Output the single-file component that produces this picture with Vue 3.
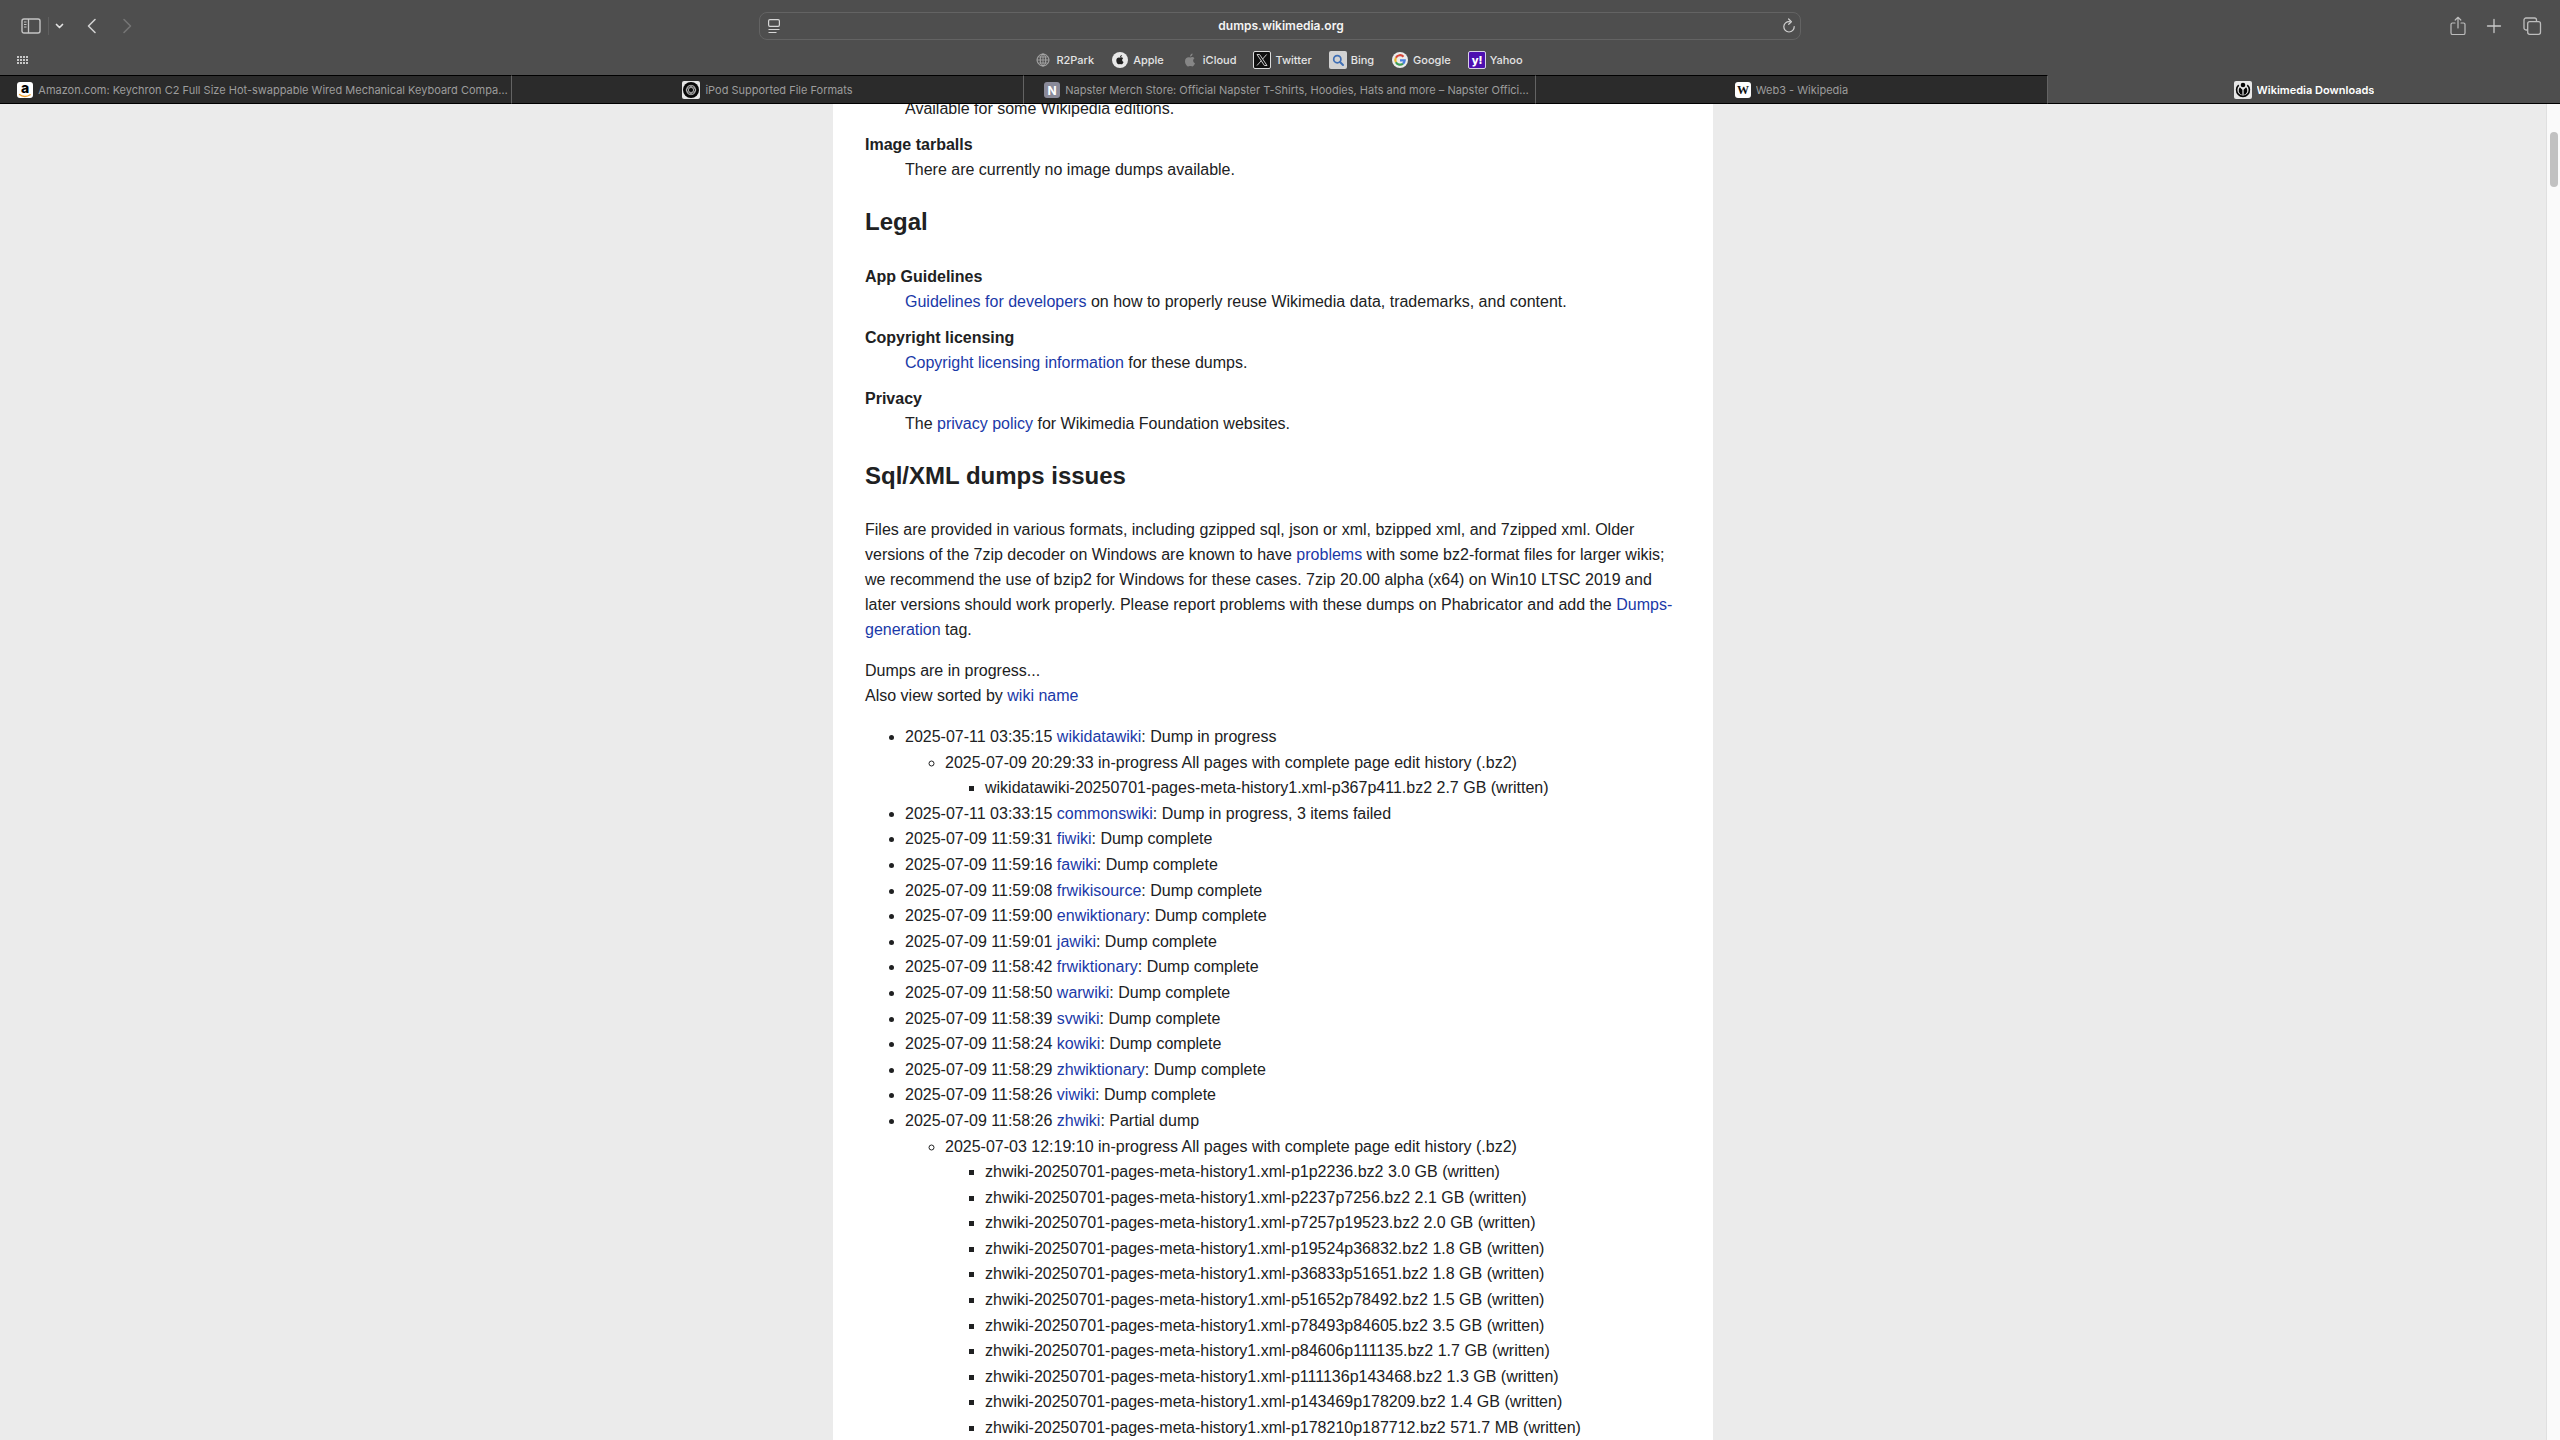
<script setup>
const bookmarks = ['R2Park', 'Apple', 'iCloud', 'Twitter', 'Bing', 'Google', 'Yahoo']

const tabs = [
  { id: 'amazon', title: 'Amazon.com: Keychron C2 Full Size Hot-swappable Wired Mechanical Keyboard Compa…' },
  { id: 'ipod', title: 'iPod Supported File Formats' },
  { id: 'napster', title: 'Napster Merch Store: Official Napster T-Shirts, Hoodies, Hats and more – Napster Offici…' },
  { id: 'web3', title: 'Web3 - Wikipedia' },
  { id: 'wikimedia', title: 'Wikimedia Downloads', active: true },
]

const history = 'in-progress All pages with complete page edit history (.bz2)'

const dumps = [
  {
    time: '2025-07-11 03:35:15', wiki: 'wikidatawiki', status: 'Dump in progress',
    job: `2025-07-09 20:29:33 ${history}`,
    files: ['wikidatawiki-20250701-pages-meta-history1.xml-p367p411.bz2 2.7 GB (written)'],
  },
  { time: '2025-07-11 03:33:15', wiki: 'commonswiki', status: 'Dump in progress, 3 items failed' },
  { time: '2025-07-09 11:59:31', wiki: 'fiwiki', status: 'Dump complete' },
  { time: '2025-07-09 11:59:16', wiki: 'fawiki', status: 'Dump complete' },
  { time: '2025-07-09 11:59:08', wiki: 'frwikisource', status: 'Dump complete' },
  { time: '2025-07-09 11:59:00', wiki: 'enwiktionary', status: 'Dump complete' },
  { time: '2025-07-09 11:59:01', wiki: 'jawiki', status: 'Dump complete' },
  { time: '2025-07-09 11:58:42', wiki: 'frwiktionary', status: 'Dump complete' },
  { time: '2025-07-09 11:58:50', wiki: 'warwiki', status: 'Dump complete' },
  { time: '2025-07-09 11:58:39', wiki: 'svwiki', status: 'Dump complete' },
  { time: '2025-07-09 11:58:24', wiki: 'kowiki', status: 'Dump complete' },
  { time: '2025-07-09 11:58:29', wiki: 'zhwiktionary', status: 'Dump complete' },
  { time: '2025-07-09 11:58:26', wiki: 'viwiki', status: 'Dump complete' },
  {
    time: '2025-07-09 11:58:26', wiki: 'zhwiki', status: 'Partial dump',
    job: `2025-07-03 12:19:10 ${history}`,
    files: [
      'p1p2236.bz2 3.0 GB', 'p2237p7256.bz2 2.1 GB', 'p7257p19523.bz2 2.0 GB', 'p19524p36832.bz2 1.8 GB',
      'p36833p51651.bz2 1.8 GB', 'p51652p78492.bz2 1.5 GB', 'p78493p84605.bz2 3.5 GB', 'p84606p111135.bz2 1.7 GB',
      'p111136p143468.bz2 1.3 GB', 'p143469p178209.bz2 1.4 GB', 'p178210p187712.bz2 571.7 MB',
    ].map((part) => `zhwiki-20250701-pages-meta-history1.xml-${part} (written)`),
  },
]
</script>

<template>
  <div class="browser">
    <header class="chrome">
      <div class="toolbar">
        <div class="tools tools-left">
          <button class="tool" aria-label="Show sidebar">
            <svg width="20" height="18" viewBox="0 0 20 18" fill="none" stroke="#c4c4c4">
              <rect x="1" y="2" width="18" height="14" rx="2" stroke-width="1.4" />
              <path d="M7.5 2v14" stroke-width="1.3" />
              <path d="M3 5h2.500M3 7.500h2.500M3 10h2.500" />
            </svg>
          </button>
          <span class="tool-divider"></span>
          <button class="tool tool-chevron" aria-label="Tab groups">
            <svg width="9" height="8" viewBox="0 0 9 8" fill="none" stroke="#e2e2e2" stroke-width="1.7" stroke-linecap="round" stroke-linejoin="round">
              <path d="M1.500 2.500l3 3 3-3" />
            </svg>
          </button>
          <button class="tool tool-back" aria-label="Back">
            <svg width="10" height="18" viewBox="0 0 10 18" fill="none" stroke="#d0d0d0" stroke-width="1.6" stroke-linecap="round" stroke-linejoin="round">
              <path d="M8 2.500L1.500 9 8 15.500" />
            </svg>
          </button>
          <button class="tool tool-forward" aria-label="Forward" disabled>
            <svg width="10" height="18" viewBox="0 0 10 18" fill="none" stroke="#757575" stroke-width="1.6" stroke-linecap="round" stroke-linejoin="round">
              <path d="M2 2.500L8.500 9 2 15.500" />
            </svg>
          </button>
        </div>

        <div class="address">
          <button class="tool" aria-label="Page settings">
            <svg width="12" height="16" viewBox="0 0 12 16" fill="none" stroke="#d6d6d6" stroke-width="1.2">
              <rect x="0.600" y="1.600" width="10.800" height="6.800" rx="1.300" />
              <path d="M0.500 11.500h11M0.500 14.500h8" />
            </svg>
          </button>
          <input class="url" type="text" value="dumps.wikimedia.org" aria-label="Address" />
          <button class="tool" aria-label="Reload">
            <svg width="14" height="16" viewBox="0 0 14 16" fill="none" stroke="#d0d0d0" stroke-width="1.200" stroke-linecap="round" stroke-linejoin="round">
              <path d="M7.500 3.600A5.200 5.200 0 1 0 12.200 8.500" />
              <path d="M6.600 1l2.800 2.700L6.700 6.300" />
            </svg>
          </button>
        </div>

        <div class="tools tools-right">
          <button class="tool" aria-label="Share">
            <svg width="16" height="20" viewBox="0 0 16 20" fill="none" stroke="#bdbdbd" stroke-width="1.200" stroke-linecap="round" stroke-linejoin="round">
              <path d="M5 7H2.500A1.600 1.600 0 0 0 1 8.600v8.300a1.600 1.600 0 0 0 1.600 1.600h10.800a1.600 1.600 0 0 0 1.600-1.600V8.600A1.600 1.600 0 0 0 13.500 7H11" />
              <path d="M8 12V1.500M5.200 4L8 1.300 10.800 4" />
            </svg>
          </button>
          <button class="tool" aria-label="New tab">
            <svg width="16" height="20" viewBox="0 0 16 20" fill="none" stroke="#c8c8c8" stroke-width="1.300" stroke-linecap="round">
              <path d="M8 3.500v13M1.500 10h13" />
            </svg>
          </button>
          <button class="tool" aria-label="Tab overview">
            <svg width="20" height="20" viewBox="0 0 20 20" fill="none" stroke="#bdbdbd" stroke-width="1.300">
              <path d="M5.500 14H4a2 2 0 0 1-2-2V4a2 2 0 0 1 2-2h8.500a2 2 0 0 1 2 2v1.500" />
              <rect x="5.700" y="5.700" width="12.800" height="12.600" rx="2" />
            </svg>
          </button>
        </div>
      </div>

      <nav class="favorites" aria-label="Favorites">
        <button class="tool grid-button" aria-label="Show favorites">
          <svg width="12" height="10" viewBox="0 0 12 10" fill="#c8c8c8">
            <template v-for="r in 3" :key="r">
              <rect v-for="c in 4" :key="c" :x="(c - 1) * 3" :y="(r - 1) * 3 + 1" width="2" height="2" />
            </template>
          </svg>
        </button>
        <a v-for="name in bookmarks" :key="name" class="bookmark" href="#">
          <svg v-if="name === 'R2Park'" width="18" height="18" viewBox="0 0 18 18" fill="none" stroke="#ababab">
            <circle cx="9" cy="9" r="6" />
            <ellipse cx="9" cy="9" rx="2.800" ry="6" />
            <path d="M3 9h12M9 3v12M4 6h10M4 12h10" stroke-width="0.800" />
          </svg>
          <svg v-else-if="name === 'Apple'" width="18" height="18" viewBox="0 0 18 18">
            <circle cx="9" cy="9" r="8" fill="#e8e8e8" />
            <path d="M9 6.700c.9-.5 2.300-.6 3.100.5-1.500 1-1.200 3 .4 3.700-.5 1.200-1.200 2.400-2.100 2.400-.5 0-.8-.3-1.400-.3s-.9.300-1.400.3c-1 0-2.300-2-2.300-3.900 0-2.500 2-3.500 3.700-2.700zM9 6.200c0-1.200.8-2.200 1.900-2.300 0 1.200-.8 2.200-1.900 2.300z" fill="#222" />
          </svg>
          <svg v-else-if="name === 'iCloud'" width="18" height="18" viewBox="0 0 18 18">
            <path d="M9.200 6.500c1.200-.7 3.200-.8 4.300.8-2 1.300-1.700 4 .5 4.900-.6 1.500-1.700 3.300-2.900 3.300-.7 0-1-.4-1.900-.4s-1.200.4-1.900.4C5.900 15.500 4 12.800 4 10.200c0-3.400 2.900-4.800 5.200-3.700zM9 5.700c0-1.600 1.200-3 2.600-3.100.1 1.700-1.200 3-2.600 3.100z" fill="#868686" />
          </svg>
          <svg v-else-if="name === 'Twitter'" width="18" height="18" viewBox="0 0 18 18">
            <rect x="0.500" y="0.500" width="17" height="17" rx="1.500" fill="#0f0f0f" stroke="#dcdcdc" />
            <path d="M4 3.500h2.600l7.400 11h-2.600zM13.600 3.500l-4.100 4.700M8.300 9.700L4 14.500" fill="none" stroke="#dedede" stroke-width="0.900" />
          </svg>
          <svg v-else-if="name === 'Bing'" width="18" height="18" viewBox="0 0 18 18">
            <rect width="18" height="18" rx="2" fill="#d2d2d2" />
            <circle cx="8.300" cy="8.200" r="3.600" fill="none" stroke="#3f6fb5" stroke-width="1.700" />
            <path d="M11 11l3 3" stroke="#3f6fb5" stroke-width="2" stroke-linecap="round" />
          </svg>
          <svg v-else-if="name === 'Google'" width="18" height="18" viewBox="0 0 18 18" fill="none" stroke-width="2.200">
            <circle cx="9" cy="9" r="8" fill="#ececec" />
            <path d="M12.500 5.700A4.700 4.700 0 0 0 4.900 6.700" stroke="#d8483b" />
            <path d="M4.900 6.700a4.700 4.700 0 0 0 0 4.600" stroke="#e8b52c" />
            <path d="M4.900 11.300a4.700 4.700 0 0 0 7.100 1.300" stroke="#3d9c55" />
            <path d="M12 12.600A4.700 4.700 0 0 0 13.700 9.300H9" stroke="#4a7fe0" />
          </svg>
          <svg v-else width="18" height="18" viewBox="0 0 18 18">
            <rect x="0.500" y="0.500" width="17" height="17" rx="1.500" fill="#4d0fb0" stroke="#d8d0e6" />
            <text class="logo-yahoo" x="9" y="13" text-anchor="middle">y!</text>
          </svg>
          <span>{{ name }}</span>
        </a>
      </nav>

      <div class="tabs" role="tablist">
        <button
          v-for="tab in tabs" :key="tab.id" class="tab" :class="{ active: tab.active }"
          role="tab" :aria-selected="tab.active ? 'true' : 'false'"
        >
          <svg v-if="tab.id === 'amazon'" width="16" height="16" viewBox="0 0 16 16">
            <rect width="16" height="16" rx="3" fill="#fff" />
            <text class="logo-amazon" x="8" y="11" text-anchor="middle">a</text>
            <path d="M2.500 12.500c3 2.600 7.500 2.600 10.700.3" fill="none" stroke="#f0a030" stroke-width="1.300" stroke-linecap="round" />
          </svg>
          <svg v-else-if="tab.id === 'ipod'" width="18" height="18" viewBox="0 0 18 18" fill="none">
            <rect width="18" height="18" rx="2" fill="#e6e6e6" />
            <circle cx="9" cy="9" r="8" fill="#080808" />
            <g stroke="#c2c2c2" stroke-width="0.700">
              <ellipse cx="9" cy="9" rx="4.700" ry="2.400" />
              <ellipse cx="9" cy="9" rx="4.700" ry="2.400" transform="rotate(60 9 9)" />
              <ellipse cx="9" cy="9" rx="4.700" ry="2.400" transform="rotate(120 9 9)" />
              <circle cx="9" cy="9" r="4.700" />
            </g>
          </svg>
          <svg v-else-if="tab.id === 'napster'" width="16" height="16" viewBox="0 0 16 16">
            <rect width="16" height="16" rx="3" fill="#8a8a99" />
            <text class="logo-napster" x="8" y="13" text-anchor="middle">N</text>
          </svg>
          <svg v-else-if="tab.id === 'web3'" width="16" height="16" viewBox="0 0 16 16">
            <rect width="16" height="16" rx="3" fill="#fff" />
            <text class="logo-wikipedia" x="8" y="12" text-anchor="middle">W</text>
          </svg>
          <svg v-else width="18" height="18" viewBox="0 0 18 18" fill="none">
            <rect width="18" height="18" rx="2" fill="#e6e6e6" />
            <circle cx="9" cy="4" r="2.300" fill="#050505" />
            <path d="M4.700 4.200A6.400 6.400 0 1 0 13.300 4.200" stroke="#050505" stroke-width="1.600" />
            <path d="M5.900 6.200a4.600 4.600 0 0 0 2.500 7.800V8.700zM12.100 6.200a4.600 4.600 0 0 1-2.500 7.800V8.700z" fill="#050505" />
          </svg>
          <span class="tab-title">{{ tab.title }}</span>
        </button>
      </div>
    </header>

    <div class="viewport">
      <div class="page">
        <main class="content">
          <dl class="first">
            <dd>Available for some Wikipedia editions.</dd>
            <dt>Image tarballs</dt>
            <dd>There are currently no image dumps available.</dd>
          </dl>

          <h2>Legal</h2>
          <dl>
            <dt>App Guidelines</dt>
            <dd><a href="#">Guidelines for developers</a> on how to properly reuse Wikimedia data, trademarks, and content.</dd>
            <dt>Copyright licensing</dt>
            <dd><a href="#">Copyright licensing information</a> for these dumps.</dd>
            <dt>Privacy</dt>
            <dd>The <a href="#">privacy policy</a> for Wikimedia Foundation websites.</dd>
          </dl>

          <h2>Sql/XML dumps issues</h2>
          <p>
            Files are provided in various formats, including gzipped sql, json or xml, bzipped xml, and 7zipped xml. Older
            versions of the 7zip decoder on Windows are known to have <a href="#">problems</a> with some bz2-format files for
            larger wikis; we recommend the use of bzip2 for Windows for these cases. 7zip 20.00 alpha (x64) on Win10 LTSC 2019
            and later versions should work properly. Please report problems with these dumps on Phabricator and add the
            <a href="#">Dumps-generation</a> tag.
          </p>
          <p>Dumps are in progress...<br />Also view sorted by <a href="#">wiki name</a></p>

          <ul class="dumps">
            <li v-for="dump in dumps" :key="dump.wiki">
              {{ dump.time }} <a href="#">{{ dump.wiki }}</a>: {{ dump.status }}
              <ul v-if="dump.job">
                <li>
                  {{ dump.job }}
                  <ul>
                    <li v-for="file in dump.files" :key="file">{{ file }}</li>
                  </ul>
                </li>
              </ul>
            </li>
          </ul>
        </main>
      </div>
      <div class="scrollbar"><div class="thumb"></div></div>
    </div>
  </div>
</template>

<style>
body {
  margin: 0;
}
</style>

<style scoped>
.browser {
  display: flex;
  flex-direction: column;
  height: 100vh;
  overflow: hidden;
  background: #ebebeb;
}

button {
  border: 0;
  padding: 0;
  background: none;
}

svg {
  display: block;
  flex: none;
  overflow: visible;
}

.chrome {
  flex: none;
  background: #4e4e4e;
  font-family: Inter, sans-serif;
  font-size: 11px;
}

.toolbar {
  display: grid;
  grid-template-columns: 1fr minmax(0, 1042px) 1fr;
  align-items: start;
  height: 46px;
  padding-top: 12px;
  box-sizing: border-box;
}

.tools {
  display: flex;
  align-items: center;
  height: 27px;
}

.tools-left {
  padding-left: 21px;
}

.tool-divider {
  width: 1px;
  height: 18px;
  margin-left: 7px;
  background: #5f5f5f;
}

.tool-chevron {
  margin-left: 6px;
}

.tool-back {
  margin-left: 23px;
}

.tool-forward {
  margin-left: 25px;
}

.tools-right {
  justify-content: flex-end;
  gap: 20px;
  padding-right: 18px;
}

.address {
  display: flex;
  align-items: center;
  height: 28px;
  padding: 0 4px 0 8px;
  border: 1px solid #636363;
  border-radius: 8px;
  box-sizing: border-box;
}

.url {
  flex: 1;
  min-width: 0;
  border: 0;
  padding: 0;
  background: none;
  color: #f4f4f4;
  font: 600 12px/20px Inter, sans-serif;
  text-align: center;
}

.favorites {
  display: flex;
  align-items: center;
  justify-content: center;
  gap: 17px;
  height: 29px;
  padding: 0 49px 2px 17px;
  box-sizing: border-box;
}

.grid-button {
  margin-right: auto;
}

.bookmark {
  display: flex;
  align-items: center;
  gap: 4px;
  color: #e4e4e4;
  font-weight: 500;
  line-height: 18px;
  text-decoration: none;
}

.bookmark:last-child {
  margin-right: auto;
}

.tabs {
  display: grid;
  grid-template-columns: repeat(5, minmax(0, 1fr));
}

.tab {
  display: flex;
  align-items: center;
  justify-content: center;
  gap: 5px;
  min-width: 0;
  height: 29px;
  box-sizing: border-box;
  border-top: 1px solid #000;
  border-right: 1px solid #636363;
  border-bottom: 1px solid #000;
  background: #2b2b2b;
  color: #9c9c9c;
  font: 400 11px/16px Inter, sans-serif;
}

.tab:nth-child(odd):not(.active) {
  padding-left: 14px;
}

.tab.active {
  border-top-color: #4e4e4e;
  border-right: 0;
  background: #4e4e4e;
  color: #fff;
  font-weight: 600;
}

.tab-title {
  overflow: hidden;
  white-space: nowrap;
}

.logo-yahoo {
  fill: #fff;
  font: 800 11px Inter, sans-serif;
}

.logo-amazon {
  fill: #000;
  font: 800 14px Inter, sans-serif;
}

.logo-napster {
  fill: #fff;
  font: 700 12px Inter, sans-serif;
}

.logo-wikipedia {
  fill: #111;
  font: 700 12px "Liberation Serif", serif;
}

.viewport {
  display: flex;
  flex: 1;
  min-height: 0;
}

.page {
  flex: 1;
  min-width: 0;
  overflow: hidden;
}

.content {
  max-width: 817px;
  margin: 0 auto;
  padding: 0 31px 0 32px;
  overflow: hidden;
  background: #fff;
  color: #202122;
  font: 16px/25px "Liberation Sans", Arial, sans-serif;
}

.content a {
  color: #1a39a8;
  text-decoration: none;
}

dl,
p {
  margin: 0;
}

dl {
  padding-top: 1px;
}

.first {
  margin-top: -9px;
}

dt {
  font-weight: 700;
}

dd {
  margin: 0 0 11px 40px;
}

dd:last-child {
  margin-bottom: 0;
}

h2 {
  margin: 22px 0 23px;
  font-size: 24px;
  line-height: 36px;
}

p {
  margin-bottom: 16px;
}

ul {
  margin: 0;
  padding-left: 40px;
}

.dumps {
  line-height: 1.6;
}

.scrollbar {
  flex: none;
  width: 14px;
  padding: 28px 3px 0;
  box-sizing: border-box;
  border-left: 1px solid #e0e0e0;
  background: #fafafa;
}

.thumb {
  width: 8px;
  height: 55px;
  border-radius: 4px;
  background: #c1c1c1;
}
</style>
